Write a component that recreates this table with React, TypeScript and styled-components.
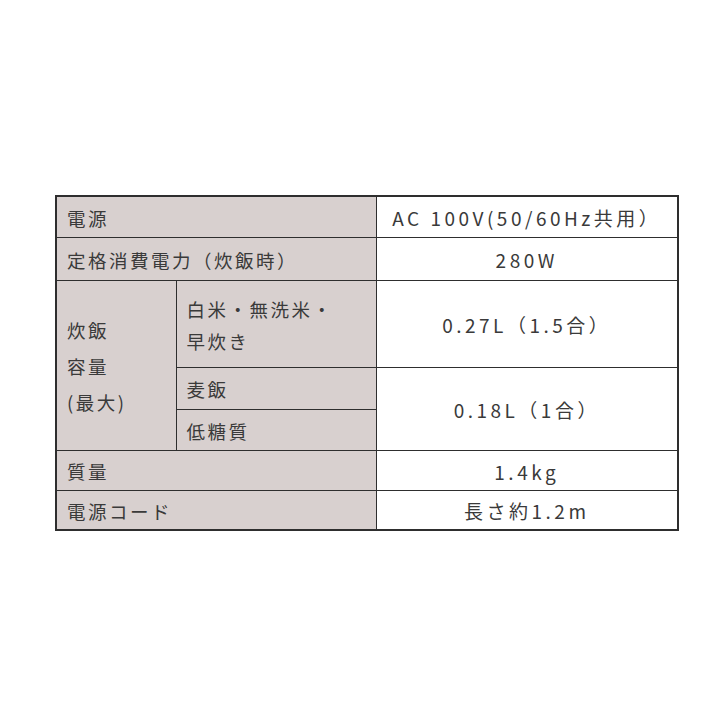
import React from "react";
import styled, { createGlobalStyle } from "styled-components";

const GlobalStyle = createGlobalStyle`
  html, body {
    margin: 0;
    padding: 0;
    background: #ffffff;
  }
`;

const Page = styled.div`
  width: 720px;
  height: 720px;
  box-sizing: border-box;
  padding: 195px 0 0 55px;
  background: #ffffff;
  font-family: "Noto Sans CJK JP", "Noto Sans", sans-serif;
  color: #3a3a3a;
`;

const SpecTable = styled.table`
  border-collapse: collapse;
  table-layout: fixed;
  width: 622px;
  border: 2px solid #2e2e2e;
`;

const Row = styled.tr<{ $h: number }>`
  height: ${(p) => p.$h}px;
`;

const HeadCell = styled.th<{ $lh?: number }>`
  background: #d8d0cf;
  border: 1.5px solid #2e2e2e;
  text-align: left;
  vertical-align: middle;
  font-weight: 400;
  font-size: 18.5px;
  letter-spacing: 2.5px;
  line-height: ${(p) => p.$lh || 24}px;
  padding: 2px 0 0 10px;
  white-space: pre-line;
`;

const ValueCell = styled.td`
  background: #ffffff;
  border: 1.5px solid #2e2e2e;
  text-align: center;
  vertical-align: middle;
  font-size: 19px;
  letter-spacing: 3.5px;
  padding: 2px 0 0 0;
  white-space: nowrap;
`;

function App() {
  return (
    <Page>
      <GlobalStyle />
      <SpecTable>
        <colgroup>
          <col style={{ width: 120 }} />
          <col style={{ width: 200 }} />
          <col style={{ width: 302 }} />
        </colgroup>
        <tbody>
          <Row $h={41}>
            <HeadCell colSpan={2}>電源</HeadCell>
            <ValueCell>AC 100V(50/60Hz共用）</ValueCell>
          </Row>
          <Row $h={43}>
            <HeadCell colSpan={2}>定格消費電力（炊飯時）</HeadCell>
            <ValueCell>280W</ValueCell>
          </Row>
          <Row $h={87}>
            <HeadCell rowSpan={3} $lh={36}>
              {"炊飯\n容量\n(最大)"}
            </HeadCell>
            <HeadCell $lh={32}>{"白米・無洗米・\n早炊き"}</HeadCell>
            <ValueCell>0.27L（1.5合）</ValueCell>
          </Row>
          <Row $h={42}>
            <HeadCell>麦飯</HeadCell>
            <ValueCell rowSpan={2}>0.18L（1合）</ValueCell>
          </Row>
          <Row $h={41}>
            <HeadCell>低糖質</HeadCell>
          </Row>
          <Row $h={40}>
            <HeadCell colSpan={2}>質量</HeadCell>
            <ValueCell>1.4kg</ValueCell>
          </Row>
          <Row $h={40}>
            <HeadCell colSpan={2}>電源コード</HeadCell>
            <ValueCell>長さ約1.2m</ValueCell>
          </Row>
        </tbody>
      </SpecTable>
    </Page>
  );
}

export default App;
